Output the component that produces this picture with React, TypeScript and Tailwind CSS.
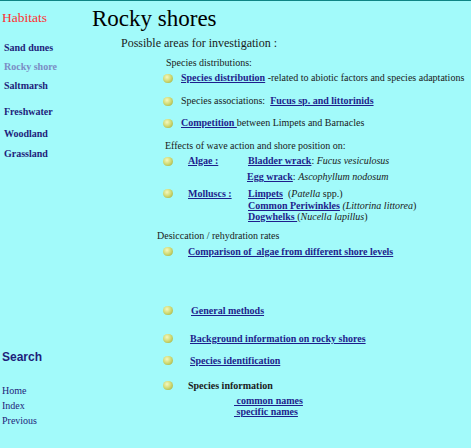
const serif = { fontFamily: '"Liberation Serif", "Times New Roman", serif' };

function Bullet() {
  return (
    <span className="inline-block w-[10px] h-[9px] rounded-full shrink-0 bg-[radial-gradient(circle_at_40%_35%,#f4f8c0_0%,#d4dc78_45%,#98a838_100%)]" />
  );
}

function A({ children, className = "" }: { children: React.ReactNode; className?: string }) {
  return (
    <a href="#" className={"font-bold underline text-[#1e1e8c] " + className}>
      {children}
    </a>
  );
}

const navItems = [
  { label: "Sand dunes", mt: "mt-[16px]", color: "text-[#1e1e7a]" },
  { label: "Rocky shore", mt: "mt-[7px]", color: "text-[#7b8cc4]" },
  { label: "Saltmarsh", mt: "mt-[7px]", color: "text-[#1e1e7a]" },
  { label: "Freshwater", mt: "mt-[14px]", color: "text-[#1e1e7a]" },
  { label: "Woodland", mt: "mt-[10px]", color: "text-[#1e1e7a]" },
  { label: "Grassland", mt: "mt-[8px]", color: "text-[#1e1e7a]" },
];

export default function App() {
  return (
    <div
      className="w-full h-[448px] overflow-hidden bg-[#a2fafa] border-t border-[#0e8484] text-[#1a1a1a] flex"
      style={serif}
    >
      {/* sidebar */}
      <div className="w-[92px] shrink-0 flex flex-col">
        <div className="mt-[9px] h-[16px] leading-[16px] pl-[2px] text-[13.5px] text-[#ff3030]">Habitats</div>
        {navItems.map((n) => (
          <div key={n.label} className={`${n.mt} h-[12px] leading-[12px] pl-[4px] text-[10px] font-bold ${n.color}`}>
            {n.label}
          </div>
        ))}
        <div
          className="mt-[190px] h-[14px] leading-[14px] pl-[2px] text-[12px] font-bold text-[#1e1e7a]"
          style={{ fontFamily: '"Liberation Sans", Arial, sans-serif' }}
        >
          Search
        </div>
        <div className="mt-[21px] h-[12px] leading-[12px] pl-[2px] text-[10px] text-[#1e1e7a]">Home</div>
        <div className="mt-[3px] h-[12px] leading-[12px] pl-[2px] text-[10px] text-[#1e1e7a]">Index</div>
        <div className="mt-[3px] h-[12px] leading-[12px] pl-[2px] text-[10px] text-[#1e1e7a]">Previous</div>
      </div>

      {/* main */}
      <div className="flex-1 flex flex-col text-[10px] leading-[12px]">
        <h1 className="h-[34px] pt-[2px] text-[23px] leading-[32px] text-black">Rocky shores</h1>
        <div className="mt-[1px] h-[14px] leading-[14px] pl-[29px] text-[12px]">Possible areas for investigation :</div>

        <div className="mt-[7px] h-[12px] pl-[74px]">Species distributions:</div>
        <div className="mt-[3px] h-[12px] pl-[71px] flex items-center gap-[8px]">
          <Bullet />
          <span>
            <A>Species distribution</A> -related to abiotic factors and species adaptations
          </span>
        </div>
        <div className="mt-[11px] h-[12px] pl-[71px] flex items-center gap-[8px]">
          <Bullet />
          <span>
            Species associations:&nbsp; <A>Fucus sp. and littorinids</A>
          </span>
        </div>
        <div className="mt-[10px] h-[12px] pl-[71px] flex items-center gap-[8px]">
          <Bullet />
          <span>
            <A>Competition </A>between Limpets and Barnacles
          </span>
        </div>

        <div className="mt-[11px] h-[12px] pl-[73px]">Effects of wave action and shore position on:</div>
        <div className="mt-[3px] h-[12px] pl-[71px] flex items-center">
          <Bullet />
          <span className="w-[60px] ml-[15px]">
            <A>Algae :</A>
          </span>
          <span>
            <A>Bladder wrack</A>: <i>Fucus vesiculosus</i>
          </span>
        </div>
        <div className="mt-[4px] h-[12px] pl-[155px]">
          <A>Egg wrack</A>: <i>Ascophyllum nodosum</i>
        </div>
        <div className="mt-[5px] pl-[71px] flex items-start">
          <span className="h-[11.5px] flex items-center">
            <Bullet />
          </span>
          <span className="w-[60px] ml-[15px] leading-[11.5px]">
            <A>Molluscs :</A>
          </span>
          <div className="flex flex-col leading-[11.5px]">
            <span>
              <A>Limpets</A>&nbsp; (<i>Patella</i> spp.)
            </span>
            <span>
              <A>Common Periwinkles</A> <i>(Littorina littorea</i>)
            </span>
            <span>
              <A>Dogwhelks </A>(<i>Nucella lapillus</i>)
            </span>
          </div>
        </div>

        <div className="mt-[7px] h-[12px] pl-[65px]">Desiccation / rehydration rates</div>
        <div className="mt-[4px] h-[12px] pl-[71px] flex items-center gap-[15px]">
          <Bullet />
          <A>Comparison of&nbsp; algae from different shore levels</A>
        </div>

        <div className="mt-[47px] h-[12px] pl-[71px] flex items-center gap-[18px]">
          <Bullet />
          <A>General methods</A>
        </div>
        <div className="mt-[16px] h-[12px] pl-[71px] flex items-center gap-[17px]">
          <Bullet />
          <A>Background information on rocky shores</A>
        </div>
        <div className="mt-[10px] h-[12px] pl-[71px] flex items-center gap-[17px]">
          <Bullet />
          <A>Species identification</A>
        </div>
        <div className="mt-[13px] h-[12px] pl-[71px] flex items-center gap-[15px]">
          <Bullet />
          <span className="font-bold text-[#1a1a1a]">Species information</span>
        </div>
        <div className="mt-[3px] pl-[142px] flex flex-col leading-[11px]">
          <A className="self-start">&nbsp;common names</A>
          <A className="self-start">&nbsp;specific names</A>
        </div>
      </div>
    </div>
  );
}
